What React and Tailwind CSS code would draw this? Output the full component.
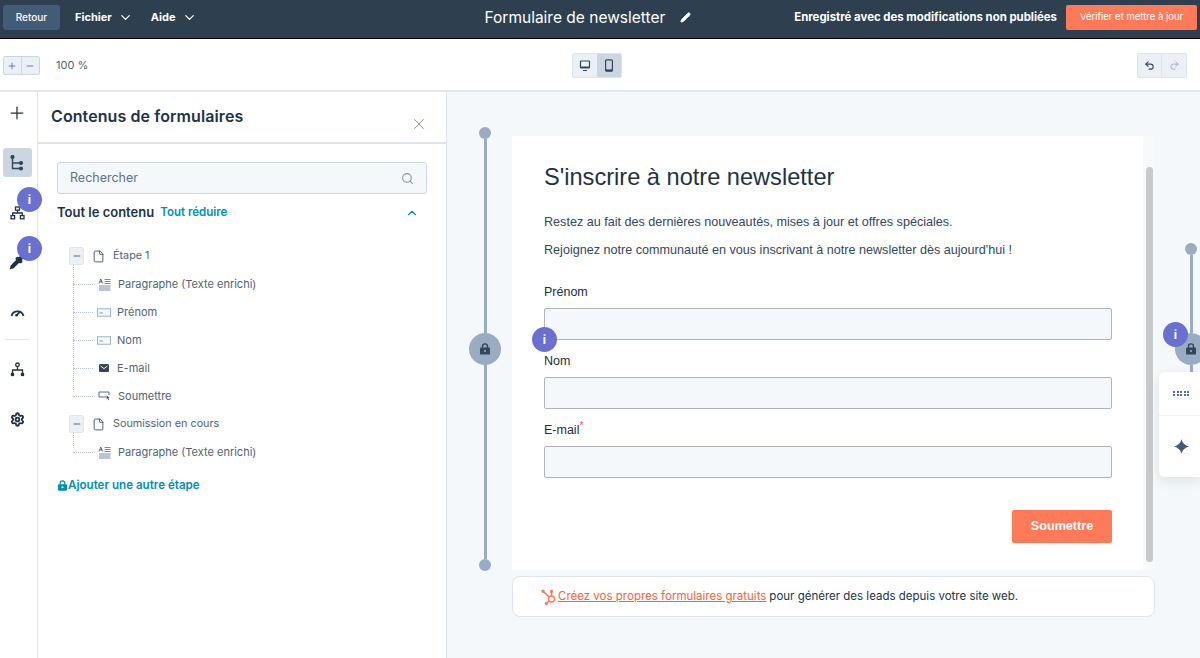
import React from "react";
import { Plus, Minus, ChevronDown, ChevronUp, X, Search, Pencil, Undo2, Redo2, Settings, Pipette, File } from "lucide-react";

const Badge = ({ className }) => (
  <div className={"absolute z-10 flex h-[25px] w-[25px] items-center justify-center rounded-full bg-[#6a70d0] text-[12px] font-bold text-white " + className}>i</div>
);

const LockIcon = ({ color = "#33475b", size = 12 }) => (
  <svg width={size} height={size} viewBox="0 0 12 12" fill="none">
    <path d="M3.5 5V3.4a2.5 2.5 0 0 1 5 0V5" stroke={color} strokeWidth="1.4" />
    <rect x="1" y="4.6" width="10" height="7" rx="1.2" fill={color} />
    <circle cx="6" cy="8" r="1.1" fill="#fff" />
  </svg>
);

const TextIcon = () => (
  <svg width="13" height="13" viewBox="0 0 13 13" fill="none" stroke="#33475b" strokeWidth="0.8">
    <path d="M1 5.5L2.8 1l1.8 4.5M1.7 4h2.2" />
    <path d="M6.5 1.5h6M6.5 3.5h6M6.5 5.5h6M1 8h11.5M1 10h11.5M1 12h11.5" stroke="#516f90" />
  </svg>
);
const FieldIcon = () => (
  <svg width="15" height="9" viewBox="0 0 15 9" fill="none">
    <rect x="0.5" y="0.5" width="14" height="8" fill="#f5f8fa" stroke="#99acc2" />
    <path d="M2.5 5h4" stroke="#7c98b6" />
  </svg>
);
const MailIcon = () => (
  <svg width="10" height="8" viewBox="0 0 10 8">
    <rect width="10" height="8" rx="1.2" fill="#33475b" />
    <path d="M1.5 2l3.5 2.6L8.5 2" fill="none" stroke="#fff" strokeWidth="0.9" />
  </svg>
);
const SubmitIcon = () => (
  <svg width="13" height="10" viewBox="0 0 13 10" fill="none">
    <path d="M8 6H1V1h10v3" stroke="#516f90" />
    <path d="M8.5 4.5l3 2-1.2.5.9 2-.8.3-.8-2-1 .8z" fill="#33475b" />
  </svg>
);
const TreeIcon = () => (
  <svg width="14" height="16" viewBox="0 0 14 16" fill="none" stroke="#33475b" strokeWidth="1.4">
    <circle cx="2.5" cy="2" r="1.4" fill="#33475b" />
    <path d="M2.5 3v10.5H10M2.5 8H10" />
    <circle cx="11" cy="8" r="1.4" fill="#33475b" />
    <circle cx="11" cy="13.5" r="1.4" fill="#33475b" />
  </svg>
);
const OrgIcon = () => (
  <svg width="15" height="14" viewBox="0 0 15 14" fill="none" stroke="#213343" strokeWidth="1.3">
    <rect x="5.5" y="1" width="4" height="3.2" />
    <path d="M7.5 4.2V7M2.7 9.5V7h9.6v2.5" />
    <rect x="1" y="9.6" width="3.6" height="3.2" />
    <rect x="10.4" y="9.6" width="3.6" height="3.2" />
  </svg>
);
const Flow = () => (
  <svg width="15" height="15" viewBox="0 0 15 15" fill="none" stroke="#213343" strokeWidth="1.3">
    <circle cx="7.5" cy="2.8" r="1.8" />
    <path d="M7.5 4.6V8M2.5 12V8h10v4" />
    <circle cx="2.5" cy="12.4" r="1.2" fill="#213343" />
    <circle cx="12.5" cy="12.4" r="1.2" fill="#213343" />
  </svg>
);
const GaugeIcon = () => (
  <svg width="15" height="10" viewBox="0 0 15 10" fill="none" stroke="#213343">
    <path d="M1.5 9A6.2 6.2 0 0 1 13.5 9" strokeWidth="1.8" />
    <path d="M6.6 8.4L10 4.6" strokeWidth="1.6" />
    <circle cx="6.5" cy="8.3" r="1.3" fill="#213343" stroke="none" />
  </svg>
);
const DesktopIcon = () => (
  <svg width="12" height="12" viewBox="0 0 12 12">
    <rect x="1.5" y="1" width="9" height="6.8" rx="0.6" fill="none" stroke="#33475b" strokeWidth="1.2" />
    <path d="M1.5 6.5h9V8h-9zM4 10h4v1H4z" fill="#33475b" />
  </svg>
);
const PhoneIcon = () => (
  <svg width="10" height="13" viewBox="0 0 10 13">
    <rect x="1.6" y="0.8" width="6.8" height="11.4" rx="1" fill="none" stroke="#33475b" strokeWidth="1.2" />
    <path d="M1.6 10.4h6.8v1.8H1.6z" fill="#33475b" />
  </svg>
);
const Sprocket = () => (
  <svg width="16" height="16" viewBox="0 0 16 16" fill="none" stroke="#ff7a59" strokeWidth="1.4">
    <circle cx="10.5" cy="10" r="3" />
    <path d="M10.5 7V3M8.4 7.9L2.5 2.8M8 12l-2.3 2" />
    <circle cx="2" cy="2.3" r="1" fill="#ff7a59" />
    <circle cx="10.5" cy="2.5" r="1" fill="#ff7a59" />
    <circle cx="5.3" cy="14.4" r="1" fill="#ff7a59" />
  </svg>
);

const MinusBox = () => (
  <div className="flex h-[18px] w-[15px] shrink-0 items-center justify-center rounded-[2px] border border-[#dfe3eb] bg-[#eaf0f6]">
    <Minus size={10} strokeWidth={2} className="text-[#33475b]" />
  </div>
);

const Parent = ({ label, size = "text-[10.8px]" }) => (
  <div className="flex h-[28px] items-center">
    <MinusBox />
    <File size={13} strokeWidth={1.6} className="ml-[8px] text-[#33475b]" />
    <span className={"ml-[8px] text-[#516373] " + size}>{label}</span>
  </div>
);

const Child = ({ icon, label, gap = "ml-[7px]" }) => (
  <div className="flex h-[28px] items-center">
    <div className="ml-[4px] mr-[4px] w-[20px] shrink-0 border-t border-dotted border-[#b6c4d4]" />
    <div className="flex w-[14px] shrink-0 items-center justify-center">{icon}</div>
    <span className={"text-[11px] text-[#516373] " + gap}>{label}</span>
  </div>
);

const Group = ({ label, children, lineBottom }) => (
  <div className="relative">
    <Parent label={label} />
    <div className={"absolute left-[4px] top-[23px] border-l border-dotted border-[#b6c4d4] " + lineBottom} />
    {children}
  </div>
);

const Field = ({ label, req }) => (
  <div className="flex flex-col">
    <label className="text-[12.5px] leading-[15px] text-[#1f2d3d]">
      {label}
      {req && <sup className="text-[10px] text-[#f2545b]">*</sup>}
    </label>
    <div className="mt-[8px] h-[32px] w-[568px] rounded-[2px] border border-[#b0b4b8] bg-[#f5f8fa]" />
  </div>
);

const Timeline = ({ className, topLine, bottomLine, last }) => (
  <div className={"flex w-[32px] shrink-0 flex-col items-center " + className}>
    <div className="h-[12px] w-[12px] shrink-0 rounded-full bg-[#99acc2]" />
    <div className={"w-[3px] shrink-0 bg-[#99acc2] " + topLine} />
    <div className="flex h-[32px] w-[32px] shrink-0 items-center justify-center rounded-full bg-[#99acc2]">
      <svg width="12" height="12" viewBox="0 0 12 12" fill="none">
        <path d="M3.5 5V3.4a2.5 2.5 0 0 1 5 0V5" stroke="#33475b" strokeWidth="1.4" />
        <rect x="1" y="4.6" width="10" height="7" rx="1.2" fill="#33475b" />
        <circle cx="6" cy="8" r="1.1" fill="#99acc2" />
      </svg>
    </div>
    <div className={"w-[3px] shrink-0 bg-[#99acc2] " + bottomLine} />
    {last && <div className="h-[12px] w-[12px] shrink-0 rounded-full bg-[#99acc2]" />}
  </div>
);

export default function App() {
  return (
    <div className="relative flex h-[658px] w-[1200px] flex-col overflow-hidden bg-white font-['Inter',sans-serif]">
      {/* top bar */}
      <header className="flex h-[39px] shrink-0 items-center border-b border-black bg-[#2e3f50] pb-[3px] pl-[3px] pr-[3px] text-white">
        <button className="flex h-[25px] w-[57px] items-center justify-center rounded-[3px] bg-[#425b76] text-[10px] font-medium">Retour</button>
        <span className="ml-[15px] text-[11px] font-bold">Fichier</span>
        <ChevronDown size={15} className="ml-[6px]" />
        <span className="ml-[18px] text-[11px] font-bold">Aide</span>
        <ChevronDown size={15} className="ml-[6px]" />
        <div className="ml-[288px] flex items-center">
          <span className="text-[15.5px] font-normal">Formulaire de newsletter</span>
          <Pencil size={11} fill="white" className="ml-[15px]" />
        </div>
        <span className="ml-auto text-[11.4px] font-bold">Enregistré avec des modifications non publiées</span>
        <button className="ml-[9px] flex h-[25px] w-[131px] items-center justify-center rounded-[2px] bg-[#ff7a59] text-[9.5px]">Vérifier et mettre à jour</button>
      </header>

      {/* toolbar */}
      <div className="flex h-[53px] shrink-0 items-center border-b-2 border-[#e5e8eb] pl-[3px] pr-[3px] pt-[2px]">
        <div className="flex h-[19px] w-[37px] items-center rounded-[2px] border border-[#cbd6e2] bg-[#eaf0f6] text-[#516f90]">
          <div className="flex h-full w-1/2 items-center justify-center border-r border-[#cbd6e2]"><Plus size={10} strokeWidth={2} /></div>
          <div className="flex h-full w-1/2 items-center justify-center"><Minus size={10} strokeWidth={2} /></div>
        </div>
        <span className="ml-[16px] text-[11px] text-[#516373]">100 %</span>
        <div className="ml-[484px] flex h-[25px] w-[50px] rounded-[2px] border border-[#dfe3eb] bg-[#eaf0f6]">
          <div className="flex w-1/2 items-center justify-center"><DesktopIcon /></div>
          <div className="flex w-1/2 items-center justify-center bg-[#cbd6e2]"><PhoneIcon /></div>
        </div>
        <div className="ml-auto mr-[10px] flex h-[25px] w-[50px] rounded-[2px] border border-[#dfe3eb] bg-[#eaf0f6]">
          <div className="flex w-1/2 items-center justify-center border-r border-[#dfe3eb]"><Undo2 size={11} strokeWidth={2.4} className="text-[#33475b]" /></div>
          <div className="flex w-1/2 items-center justify-center"><Redo2 size={11} className="text-[#99acc2]" /></div>
        </div>
      </div>

      <div className="flex min-h-0 flex-1">
        {/* rail */}
        <aside className="flex w-[38px] shrink-0 flex-col items-center border-r border-[#dfe3eb] pt-[11px]">
          <Plus size={20} strokeWidth={1.5} className="mr-[3px] text-[#213343]" />
          <div className="mr-[3px] mt-[25px] flex h-[29px] w-[29px] items-center justify-center rounded-[3px] bg-[#cbd6e2]"><TreeIcon /></div>
          <div className="mr-[3px] mt-[29px]"><OrgIcon /></div>
          <Pipette size={16} fill="#213343" className="mr-[3px] mt-[34px] text-[#213343]" />
          <div className="mr-[3px] mt-[37px]"><GaugeIcon /></div>
          <div className="mr-[3px] mt-[22px] w-[24px] border-t border-[#dfe3eb]" />
          <div className="mr-[3px] mt-[22px]"><Flow /></div>
          <Settings size={15} strokeWidth={3} className="mr-[3px] mt-[35px] text-[#213343]" />
        </aside>

        {/* panel */}
        <section className="flex w-[409px] shrink-0 flex-col border-r border-[#dfe3eb]">
          <div className="relative h-[52px] shrink-0 border-b-2 border-[#dfe3eb] pl-[13px] pt-[13px]">
            <h2 className="text-[16px] font-semibold leading-[22px] tracking-[0.09px] text-[#213343]">Contenus de formulaires</h2>
            <X size={18} strokeWidth={1.3} className="absolute left-[372px] top-[23px] text-[#7c98b6]" />
          </div>
          <div className="px-[19px] pt-[18px]">
            <div className="flex h-[32px] w-[370px] items-center justify-between rounded-[3px] border border-[#cbd6e2] bg-[#f5f8fa] px-[12px]">
              <span className="pt-[1px] text-[12.5px] text-[#5f7285]">Rechercher</span>
              <Search size={13} className="text-[#7c98b6]" />
            </div>
            <div className="mt-[10px] flex h-[18px] items-center">
              <span className="text-[13px] font-semibold text-[#213343]">Tout le contenu</span>
              <span className="ml-[6px] text-[11.5px] font-semibold text-[#0091ae]">Tout réduire</span>
              <ChevronUp size={14} className="ml-auto mr-[8px] text-[#0091ae]" />
            </div>
            <div className="ml-[12px] mt-[20px] flex flex-col">
              <Group label="Étape 1" lineBottom="h-[127px]">
                <Child icon={<TextIcon />} label="Paragraphe (Texte enrichi)" />
                <Child icon={<FieldIcon />} label="Prénom" gap="ml-[6px]" />
                <Child icon={<FieldIcon />} label="Nom" gap="ml-[6px]" />
                <Child icon={<MailIcon />} label="E-mail" gap="ml-[6px]" />
                <Child icon={<SubmitIcon />} label="Soumettre" />
              </Group>
              <Group label="Soumission en cours" lineBottom="h-[15px]">
                <Child icon={<TextIcon />} label="Paragraphe (Texte enrichi)" />
              </Group>
            </div>
            <div className="mt-[11px] flex items-center text-[11.6px] font-semibold text-[#0091ae]">
              <LockIcon color="#0091ae" size={11} />
              <span>Ajouter une autre étape</span>
            </div>
          </div>
        </section>

        {/* canvas */}
        <main className="flex min-w-0 flex-1 items-start bg-[#f5f8fa] pl-[22px] pt-[35px]">
          <Timeline className="mr-[11px]" topLine="h-[194px]" bottomLine="h-[194px]" last />
          <div className="mt-[9px] flex w-[643px] shrink-0 flex-col">
            <div className="flex h-[434px]">
              <div className="flex w-[631px] flex-col bg-white pl-[32px] pt-[26px]">
                <h1 className="font-['Liberation_Sans',sans-serif] text-[23.6px] leading-[30px] text-[#213343]">S'inscrire à notre newsletter</h1>
                <div className="font-['Liberation_Sans',sans-serif]">
                  <p className="mt-[22px] text-[12.6px] leading-[16px] text-[#33475b]">Restez au fait des dernières nouveautés, mises à jour et offres spéciales.</p>
                  <p className="mt-[12px] text-[12.6px] leading-[16px] text-[#33475b]">Rejoignez notre communauté en vous inscrivant à notre newsletter dès aujourd'hui !</p>
                  <div className="mt-[27px] flex flex-col gap-[14px]">
                    <Field label="Prénom" />
                    <Field label="Nom" />
                    <Field label="E-mail" req />
                  </div>
                  <div className="mt-[32px] flex w-[568px] justify-end">
                    <button className="h-[33px] w-[100px] rounded-[2px] bg-[#ff7a59] text-[12.6px] font-bold text-white">Soumettre</button>
                  </div>
                </div>
              </div>
              <div className="flex w-[12px] flex-col bg-[#f8f9fa] pl-[3px] pt-[31px]">
                <div className="h-[395px] w-[7px] rounded-full bg-[#c8c9ca]" />
              </div>
            </div>
            <div className="mt-[6px] flex h-[41px] items-center rounded-[8px] border border-[#dfe3eb] bg-white pl-[28px] text-[11.5px]">
              <Sprocket />
              <a className="ml-[1px] text-[#f2643d] underline">Créez vos propres formulaires gratuits</a>
              <span className="ml-[3px] text-[#213343]">pour générer des leads depuis votre site web.</span>
            </div>
          </div>
          <Timeline className="ml-[20px] mt-[116px]" topLine="h-[78px]" bottomLine="h-[20px]" />
        </main>
      </div>

      {/* floating panel */}
      <div className="absolute left-[1159px] top-[372px] z-10 flex h-[105px] w-[41px] flex-col rounded-l-[6px] bg-white pl-[3px] shadow-[0_4px_12px_rgba(45,62,80,0.12)]">
        <div className="flex h-[43px] items-center justify-center">
          <div className="grid grid-cols-5 gap-[1.5px]">
            {Array.from({ length: 10 }).map((_, i) => <span key={i} className="h-[2px] w-[2px] bg-[#516f90]" />)}
          </div>
        </div>
        <div className="flex flex-1 items-center justify-center">
          <svg width="15" height="15" viewBox="0 0 15 15"><path d="M7.5 0C8 3.5 11 6.5 15 7.5 11 8.5 8 11.5 7.5 15 7 11.5 4 8.5 0 7.5 4 6.5 7 3.5 7.5 0Z" fill="#425b76" /></svg>
        </div>
      </div>
      <div className="absolute left-[1159px] top-[415px] z-10 h-[1px] w-[41px] bg-[#eaf0f6]" />

      <Badge className="left-[17px] top-[187px]" />
      <Badge className="left-[17px] top-[236px]" />
      <Badge className="left-[532px] top-[327px]" />
      <Badge className="left-[1163px] top-[322px]" />
    </div>
  );
}
